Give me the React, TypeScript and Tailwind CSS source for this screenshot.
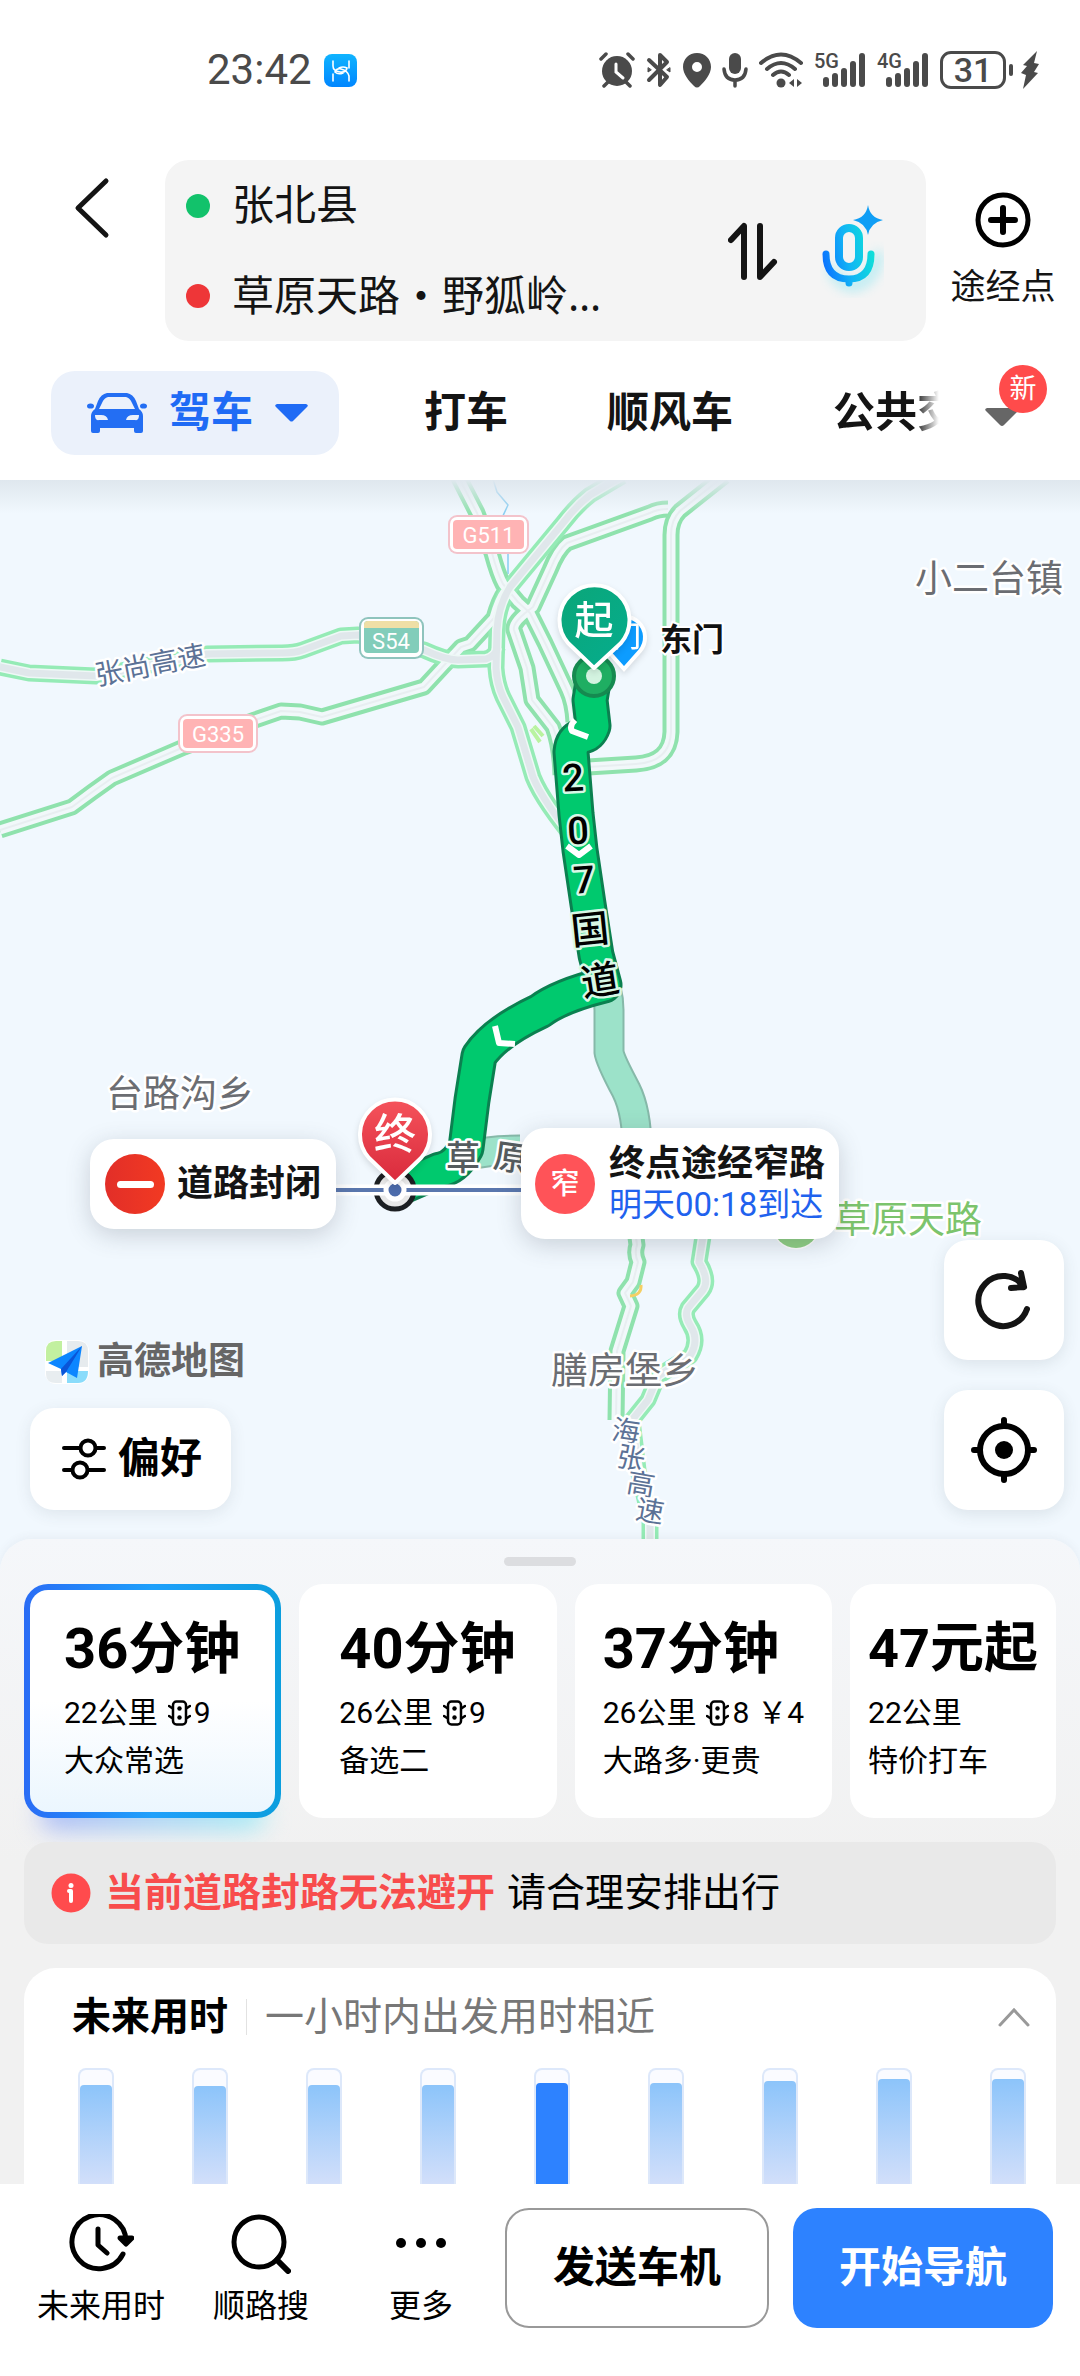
import { useState } from "react";
import clsx from "clsx";

const FONT = "font-['Roboto','Noto_Sans_CJK_SC',sans-serif]";

const TABS = ["打车", "顺风车"];

const ROUTES = [
  { title: "36分钟", distance: "22公里", lights: "9", toll: "", note: "大众常选", pad: "pl-10", size: "text-[56px]" },
  { title: "40分钟", distance: "26公里", lights: "9", toll: "", note: "备选二", pad: "pl-10", size: "text-[56px]" },
  { title: "37分钟", distance: "26公里", lights: "8", toll: "￥4", note: "大路多·更贵", pad: "pl-7", size: "text-[56px]" },
  { title: "47元起", distance: "22公里", lights: "", toll: "", note: "特价打车", pad: "pl-[18px]", size: "text-[54px]" },
];

// 各时段用时（柱子顶部留白，px）
const BARS = [15, 16, 15, 15, 13, 13, 11, 9, 9];
const CURRENT_BAR = 4;

// 普通道路
const ROADS = [
  "M0 830L72 807Q92 792 112 778L184 747L255 720L281 711L300 712L322 717L424 687L461 647L470 644L494 618Q499 600 505 592",
  "M458 476L477 513L492 553Q498 575 503 584L518 602L530 613L545 643L567 690Q573 703 574 722",
  "M724 476L680 511Q671 520 671 535L671 732Q670 762 636 764L588 767",
  "M668 509Q658 509 650 513L567 543Q558 550 550 570L533 607Q512 622 514 630L527 668L532 700L553 727Q560 745 561 775",
  "M635 1230L637 1245Q634 1254 638 1262L633 1282L625 1293L631 1306L617 1351L616 1420",
];

// 高速
const HIGHWAYS = [
  "M0 667L29 673L96 676L150 665L207 654L282 653Q295 653 303 650L341 636L358 635L424 650Q446 660 458 660L486 659Q496 656 497 648",
  "M622 476L590 495Q576 506 563 523L510 587Q498 606 497 630L496 668Q497 684 503 697L518 727L533 777Q543 802 580 846",
  "M704 1230L699 1262Q710 1280 703 1290L688 1308Q684 1315 690 1325Q700 1340 690 1356L658 1376L648 1400L632 1420L638 1470L650 1520L650 1580",
];

const ROUTE =
  "M594 676L590 700L593 726Q590 735 582 736Q572 740 571 752L576 814L580 850L588 904L596 955L604 985Q560 996 540 1011Q495 1032 479 1056L472 1100L466 1148Q455 1168 440 1170L396 1189";

const ROAD_NAME = [
  { ch: "2", x: 573, y: 777, r: -3 },
  { ch: "0", x: 578, y: 830, r: -3 },
  { ch: "7", x: 584, y: 879, r: -4 },
  { ch: "国", x: 590, y: 929, r: -6 },
  { ch: "道", x: 600, y: 980, r: -9 },
];

const HIGHWAY_NAME = [
  { ch: "海", x: 626, y: 1431, r: 8 },
  { ch: "张", x: 631, y: 1458, r: 10 },
  { ch: "高", x: 641, y: 1484, r: 10 },
  { ch: "速", x: 650, y: 1511, r: 10 },
];

function Signal({ label }: { label: string }) {
  return (
    <div className="relative h-9 w-[52px]">
      <span className="absolute left-0 top-0 text-[20px] leading-[18px] font-medium">{label}</span>
      <svg className="absolute right-0 top-0" width="44" height="36" viewBox="0 0 44 36" stroke="currentColor" strokeWidth="6" strokeLinecap="round">
        <path d="M4 28V32M13 24V32M22 19V32M31 12V32M40 4V32" />
      </svg>
    </div>
  );
}

function StatusBar() {
  return (
    <div className="flex h-[140px] items-center justify-between pl-[207px] pr-10 text-[#4a4a4a]">
      <div className="flex items-center gap-3">
        <span className="text-[42px] leading-[48px]">23:42</span>
        <svg width="33" height="33" viewBox="0 0 33 33">
          <defs>
            <linearGradient id="appIcon" x1="0" y1="0" x2="0" y2="1">
              <stop offset="0" stopColor="#10b4ff" />
              <stop offset="1" stopColor="#0086ff" />
            </linearGradient>
          </defs>
          <rect width="33" height="33" rx="8" fill="url(#appIcon)" />
          <path d="M9 7V12Q9 17 16 18Q22 19 23 14Q19 12 15 14M9 27V20M25 7V14M25 27V22Q24 17 17 15Q12 14 11 18Q14 21 19 19" fill="none" stroke="#fff" strokeWidth="1.6" strokeLinecap="round" />
        </svg>
      </div>
      <div className="flex items-center gap-[11px]">
        <svg width="36" height="36" viewBox="0 0 36 36" fill="none" stroke="currentColor" strokeLinecap="round">
          <circle cx="18" cy="19" r="15" fill="currentColor" stroke="none" />
          <path d="M2 7L7 2M34 7L29 2M5 34L9 30M31 34L27 30" strokeWidth="3.5" />
          <path d="M17 12V20L24 26" stroke="#fff" strokeWidth="3" />
        </svg>
        <svg width="26" height="36" viewBox="0 0 26 36" fill="none" stroke="currentColor" strokeWidth="4" strokeLinecap="round" strokeLinejoin="round">
          <path d="M3 8L21 25L14 33V3L21 10L3 28" />
          <path d="M2 16V20L5 18ZM24 16V20L21 18Z" fill="currentColor" strokeWidth="1" />
        </svg>
        <svg width="28" height="36" viewBox="0 0 28 36" fill="currentColor" fillRule="evenodd">
          <path d="M14 1C6 1 0 7 0 15C0 22 6 29 11 34Q14 37 17 34C22 29 28 22 28 15C28 7 22 1 14 1ZM14 10A5 5 0 1 1 14 20A5 5 0 1 1 14 10Z" />
        </svg>
        <svg width="26" height="36" viewBox="0 0 26 36" fill="none" stroke="currentColor" strokeWidth="3.5" strokeLinecap="round">
          <rect x="7" y="1" width="12" height="21" rx="6" fill="currentColor" stroke="none" />
          <path d="M2 17Q3 28 13 28Q23 28 24 17M13 28V34" />
        </svg>
        <svg width="44" height="36" viewBox="0 0 44 36" fill="none" stroke="currentColor" strokeWidth="4" strokeLinecap="round">
          <path d="M2 11Q22 -6 42 11M8 17Q22 5 36 17M14 23Q22 16 30 23" />
          <circle cx="22" cy="31" r="4.500" fill="currentColor" stroke="none" />
          <path d="M35 27V35L30 31ZM38 27V35L43 31Z" fill="currentColor" stroke="none" />
        </svg>
        <Signal label="5G" />
        <Signal label="4G" />
        <div className="flex items-center gap-[3px]">
          <div className="flex h-[38px] w-[66px] items-center justify-center rounded-[11px] border-[3px] border-current text-[34px] leading-8 font-medium">31</div>
          <div className="h-3 w-1 rounded-full bg-current" />
          <svg className="ml-1" width="20" height="38" viewBox="0 0 20 38" fill="currentColor">
            <path d="M17 0L3 14L7 15L1 22L6 24L3 38L18 22L14 21L19 13L14 12Z" />
          </svg>
        </div>
      </div>
    </div>
  );
}

function SearchHeader() {
  return (
    <div className="grid grid-cols-[165px_1fr_154px] pt-5">
      <button aria-label="返回" className="flex h-24 items-center pl-[74px]">
        <svg width="36" height="62" viewBox="0 0 36 62" fill="none" stroke="#141414" strokeWidth="5" strokeLinecap="round" strokeLinejoin="round">
          <path d="M32 4L4 31L32 58" />
        </svg>
      </button>
      <div className="flex items-center rounded-3xl bg-[#f4f4f4] pr-[42px] text-[#141414]">
        <div className="min-w-0 flex-1">
          <button className="flex h-[91px] w-full items-center gap-[22px] pl-[21px] text-[42px] leading-[50px]">
            <span className="size-6 rounded-full bg-[#12c26b]" />
            <span>张北县</span>
          </button>
          <button className="flex h-[90px] w-full items-center gap-[22px] pl-[21px] text-[42px] leading-[50px]">
            <span className="size-6 rounded-full bg-[#ee3638]" />
            <span className="whitespace-nowrap">
              草原天路・野狐岭<span className="font-['Noto_Sans',sans-serif]">…</span>
            </span>
          </button>
        </div>
        <button aria-label="交换起终点">
          <svg width="50" height="60" viewBox="0 0 50 60" fill="none" stroke="#141414" strokeWidth="6" strokeLinecap="round" strokeLinejoin="round">
            <path d="M3 19L16 5V56M32 5V56L46 41" />
          </svg>
        </button>
        <button aria-label="语音输入" className="ml-[42px]">
          <svg width="64" height="94" viewBox="0 0 64 94" fill="none" strokeLinecap="round">
            <defs>
              <linearGradient id="mic" gradientUnits="userSpaceOnUse" x1="2" y1="60" x2="54" y2="50">
                <stop offset="0" stopColor="#0a70ff" />
                <stop offset="0.5" stopColor="#12b4f5" />
                <stop offset="1" stopColor="#0fe0d8" />
              </linearGradient>
              <filter id="micGlow" x="-50%" y="-50%" width="200%" height="200%">
                <feGaussianBlur stdDeviation="6" />
              </filter>
            </defs>
            <path d="M12 66Q20 82 34 82Q54 78 58 52" stroke="#3fdcf0" strokeWidth="10" opacity="0.35" filter="url(#micGlow)" />
            <rect x="19" y="24" width="20" height="39" rx="10" stroke="url(#mic)" strokeWidth="8" />
            <path d="M6 50Q6 75 29 75Q51 75 51 50M29 75V79" stroke="url(#mic)" strokeWidth="7" />
            <path d="M48 1Q50 14 63 16Q50 19 48 31Q46 19 33 16Q46 14 48 1Z" fill="#109ef5" />
          </svg>
        </button>
      </div>
      <button className="flex flex-col items-center gap-[17px] pt-8 text-[35px] leading-[46px] text-[#141414]">
        <svg width="56" height="56" viewBox="0 0 56 56" fill="none" stroke="#000" strokeWidth="5" strokeLinecap="round">
          <circle cx="28" cy="28" r="25" />
          <path d="M28 16V40M16 28H40" strokeWidth="6" />
        </svg>
        途经点
      </button>
    </div>
  );
}

function ModeTabs() {
  return (
    <div className="mt-[30px] mb-[25px] flex h-[84px] items-center pl-[51px] text-[42px] leading-[50px] font-bold text-[#141414]">
      <button className="flex h-[84px] w-[288px] items-center rounded-3xl bg-[#ebf1fb] pl-9 text-[#1f6bf5]">
        <svg width="60" height="42" viewBox="0 0 60 42" fill="#236ef3">
          <path fillRule="evenodd" d="M20 1H40Q46 2 49 9L52 17Q56 20 56 24V39Q56 41 54 41H49Q47 41 47 39V36H13V39Q13 41 11 41H6Q4 41 4 39V24Q4 20 8 17L11 9Q14 2 20 1ZM21 5Q17 6 15 11L12 17H48L45 11Q43 6 39 5ZM8 23Q8 29 12 28H21Q20 23 14 23ZM52 23Q52 29 48 28H39Q40 23 46 23Z" />
          <ellipse cx="3.500" cy="14" rx="3.500" ry="2.600" />
          <ellipse cx="56.500" cy="14" rx="3.500" ry="2.600" />
        </svg>
        <span className="ml-[22px]">驾车</span>
        <svg className="ml-[22px]" width="33" height="18" viewBox="0 0 33 18" fill="#1f6bf5">
          <path d="M2 0H31Q34 1 32 3L18 17Q16.500 18 15 17L1 3Q-1 1 2 0Z" />
        </svg>
      </button>
      {TABS.map((t) => (
        <button key={t} className="ml-[85px] mr-[14px]">{t}</button>
      ))}
      <button className="ml-[86px] whitespace-nowrap mask-r-from-65% mask-r-to-84%">公共交</button>
      <button aria-label="更多方式" className="relative ml-[26px] h-[84px] w-[62px]">
        <svg className="mt-2" width="34" height="19" viewBox="0 0 34 19" fill="#666">
          <path d="M2 0H32Q35 1 33 3L19 17Q17 19 15 17L1 3Q-1 1 2 0Z" />
        </svg>
        <span className="absolute right-0 top-[-6px] flex size-12 items-center justify-center rounded-full bg-[#ff4b4b] text-[27px] leading-8 font-normal text-white">新</span>
      </button>
    </div>
  );
}

function RoadSign({ x, y, w, label }: { x: number; y: number; w: number; label: string }) {
  return (
    <g>
      <rect x={x} y={y} width={w} height="39" rx="9" fill="#f3c3cb" />
      <rect x={x + 2} y={y + 2} width={w - 4} height="35" rx="7" fill="#fff" />
      <rect x={x + 5} y={y + 5} width={w - 10} height="29" rx="4" fill="#ffb3b4" />
      <text x={x + w / 2} y={y + 28} textAnchor="middle" fontSize="22" fill="#fff">{label}</text>
    </g>
  );
}

function MapCanvas() {
  return (
    <svg className="absolute inset-0 size-full" viewBox="0 480 1080 1091" preserveAspectRatio="xMidYMin slice">
      <defs>
        <linearGradient id="pinEnd" x1="0" y1="0" x2="0" y2="1">
          <stop offset="0" stopColor="#f5535b" />
          <stop offset="1" stopColor="#d92a3c" />
        </linearGradient>
        <linearGradient id="pinStart" x1="0" y1="0" x2="1" y2="1">
          <stop offset="0" stopColor="#0ba678" />
          <stop offset="1" stopColor="#05ad8e" />
        </linearGradient>
        <linearGradient id="topShade" x1="0" y1="0" x2="0" y2="1">
          <stop offset="0" stopColor="#dfe7ee" />
          <stop offset="1" stopColor="#dfe7ee" stopOpacity="0" />
        </linearGradient>
      </defs>
      <g fill="none" strokeLinejoin="round">
        <path d="M492 476L497 492L508 505L501 520M508 550V574" stroke="#86cdf2" strokeWidth="1.500" />
        <path d="M531 729L540 742M534 726L543 736" stroke="#b9f3a0" strokeWidth="4" />
        {ROADS.map((d) => (
          <path key={d} d={d} stroke="#8fe2ad" strokeWidth="17" />
        ))}
        {HIGHWAYS.map((d) => (
          <path key={d} d={d} stroke="#95ebb6" strokeWidth="17" />
        ))}
        {ROADS.map((d) => (
          <path key={d} d={d} stroke="#f1f8fa" strokeWidth="9" />
        ))}
        {ROADS.map((d) => (
          <path key={d} d={d} stroke="#e8eef1" strokeWidth="2" />
        ))}
        {HIGHWAYS.map((d) => (
          <path key={d} d={d} stroke="#eef8f6" strokeWidth="10" />
        ))}
        {HIGHWAYS.map((d) => (
          <path key={d} d={d} stroke="#e0e7eb" strokeWidth="7" />
        ))}
        <path d="M641 1285Q642 1295 630 1296" stroke="#f5cf63" strokeWidth="3" />
        {/* 备选路线 */}
        <path d="M600 975Q609 990 609 1010V1052Q610 1060 626 1090Q637 1112 637 1150M470 1155Q490 1150 520 1150" stroke="#86b9a9" strokeWidth="31" />
        <path d="M600 975Q609 990 609 1010V1052Q610 1060 626 1090Q637 1112 637 1150M470 1155Q490 1150 520 1150" stroke="#9ce2c9" strokeWidth="27" />
        {/* 主路线 */}
        <path d={ROUTE} stroke="#0b8050" strokeWidth="37" />
        <path d={ROUTE} stroke="#00c96e" strokeWidth="31" />
        <path d="M575 720Q569 726 572 731L588 737M567 846L579 855L591 846M495 1026L499 1043L515 1044" stroke="#fff" strokeWidth="6" />
      </g>
      <rect x="0" y="480" width="1080" height="34" fill="url(#topShade)" />

      {/* 道路编号 */}
      <RoadSign x={448} y={515} w={81} label="G511" />
      <RoadSign x={178} y={714} w={80} label="G335" />
      <rect x="359" y="617" width="65" height="42" rx="9" fill="#8fc4bd" />
      <rect x="361" y="619" width="61" height="38" rx="7" fill="#fff" />
      <rect x="364" y="621" width="55" height="32" rx="4" fill="#82cdba" />
      <path d="M364 628V625Q364 621 368 621H415Q419 621 419 625V628Z" fill="#efdfa6" />
      <text x="391" y="649" textAnchor="middle" fontSize="22" fill="#fff">S54</text>

      {/* 地名 */}
      <g fontSize="37" fill="#6b6d72" stroke="#fff" strokeWidth="5" strokeLinejoin="round" paintOrder="stroke">
        <text x="915" y="592">小二台镇</text>
        <text x="106" y="1107">台路沟乡</text>
        <text x="551" y="1384">膳房堡乡</text>
        <text x="446" y="1170" fontSize="34" fontWeight="500" fill="#555b5e">草</text>
        <text x="494" y="1170" fontSize="34" fontWeight="500" fill="#555b5e" transform="rotate(8 511 1157)">原</text>
        <text x="94" y="675" fontSize="28" fill="#5c7296" transform="rotate(-11 150 664)">张尚高速</text>
        {HIGHWAY_NAME.map((c) => (
          <text key={c.ch} x={c.x} y={c.y + 10} fontSize="28" fill="#5c7296" textAnchor="middle" transform={`rotate(${c.r} ${c.x} ${c.y})`}>{c.ch}</text>
        ))}
        <circle cx="796" cy="1225" r="23" fill="#8fd083" stroke="#fff" strokeWidth="3" />
        <text x="834" y="1233" fill="#7cc46c">草原天路</text>
      </g>
      <g fontSize="38" fontWeight="500" fill="#000" stroke="#d8f8e6" strokeWidth="5" strokeLinejoin="round" paintOrder="stroke" textAnchor="middle">
        {ROAD_NAME.map((c) => (
          <text key={c.ch} x={c.x} y={c.y + 14} transform={`rotate(${c.r} ${c.x} ${c.y})`}>{c.ch}</text>
        ))}
      </g>

      {/* 起点 */}
      <g className="drop-shadow-md">
        <path d="M624 669L608 651A21 21 0 1 1 640 651Z" fill="#0d9cff" stroke="#fff" strokeWidth="4" />
        <text x="627" y="647" textAnchor="middle" fontSize="28" fontWeight="500" fill="#fff">门</text>
      </g>
      <circle cx="594" cy="676" r="20" fill="#1fae62" stroke="#158a50" strokeWidth="4" />
      <circle cx="594" cy="676" r="8" fill="#d3f3e0" />
      <g className="drop-shadow-md">
        <path d="M594 668L568 643A35 35 0 1 1 621 643Z" fill="url(#pinStart)" stroke="#fff" strokeWidth="4" strokeLinejoin="round" />
        <text x="594" y="634" textAnchor="middle" fontSize="39" fontWeight="500" fill="#fff">起</text>
      </g>
      <text x="660" y="651" fontSize="32" fontWeight="700" fill="#111" stroke="#fff" strokeWidth="4" paintOrder="stroke">东门</text>

      {/* 终点 */}
      <circle cx="395" cy="1190" r="19" fill="#e8e8e8" stroke="#1c1f22" strokeWidth="5" />
      <path d="M330 1190H530" stroke="#fff" strokeWidth="11" />
      <path d="M330 1190H530" stroke="#5a77ae" strokeWidth="4" />
      <circle cx="395" cy="1190" r="9" fill="#4d6cac" stroke="#fff" strokeWidth="5" />
      <g className="drop-shadow-md">
        <path d="M395 1183L369 1158A35 35 0 1 1 421 1158Z" fill="url(#pinEnd)" stroke="#fff" strokeWidth="4" strokeLinejoin="round" />
        <text x="395" y="1149" textAnchor="middle" fontSize="42" fontWeight="500" fill="#fff">终</text>
      </g>
    </svg>
  );
}

function MapArea() {
  return (
    <div className="relative min-h-[900px] flex-1 overflow-hidden bg-[#f1f8fe]">
      <MapCanvas />

      <div className="absolute left-[90px] top-[659px] flex h-[90px] w-[246px] items-center gap-3 rounded-3xl bg-white pl-[15px] text-[36px] leading-[42px] font-bold text-[#141414] shadow-[0_6px_24px_rgba(60,70,80,0.22)]">
        <span className="flex size-[60px] items-center justify-center rounded-full bg-linear-to-r from-[#e22e28] to-[#f23a22]">
          <span className="h-[7px] w-[37px] rounded-full bg-white" />
        </span>
        道路封闭
      </div>

      <div className="absolute left-[521px] top-[648px] flex h-[111px] w-[318px] items-center gap-[14px] rounded-3xl bg-white pl-[14px] shadow-[0_6px_24px_rgba(60,70,80,0.22)]">
        <span className="flex size-[60px] items-center justify-center rounded-full bg-[#ff5358] text-[29px] leading-9 font-medium text-white">窄</span>
        <div className="whitespace-nowrap">
          <div className="text-[36px] leading-[42px] font-bold text-[#141414]">终点途经窄路</div>
          <div className="text-[33px] leading-10 text-[#1f62ee]">明天00:18到达</div>
        </div>
      </div>

      <div className="absolute bottom-[61px] left-[30px]">
        <div className="mb-6 ml-[15px] flex items-center gap-2 text-[37px] leading-[44px] font-bold text-[#666]">
          <svg width="44" height="44" viewBox="0 0 44 44">
            <rect width="44" height="44" rx="11" fill="#fff" />
            <path d="M11 1H17V21H1V11Q1 1 11 1Z" fill="#c2f0a0" />
            <path d="M22 1H33Q43 1 43 11V27H22Z" fill="#e6ebee" />
            <path d="M1 31H17V43H11Q1 43 1 34Z" fill="#e8edf0" />
            <path d="M22 31H43Q43 43 33 43H22Z" fill="#8adcfb" />
            <path d="M37 6L3 23L16 29L17 36L21 32L32 38Z" fill="#0c86ff" />
            <path d="M37 6L16 29L17 36L21 32Z" fill="#0a55d8" />
          </svg>
          高德地图
        </div>
        <button className="flex h-[102px] w-[201px] items-center gap-3 rounded-3xl bg-white pl-8 text-[42px] leading-[50px] font-bold text-black shadow-[0_4px_16px_rgba(60,70,80,0.1)]">
          <svg width="44" height="42" viewBox="0 0 44 42" fill="none" stroke="#000" strokeWidth="4" strokeLinecap="round">
            <path d="M2 10H18M34 10H42M2 32H10M26 32H42" />
            <circle cx="26" cy="10" r="7.500" />
            <circle cx="18" cy="32" r="7.500" />
          </svg>
          偏好
        </button>
      </div>

      <div className="absolute bottom-[61px] right-4 flex flex-col gap-[30px]">
        <button aria-label="刷新" className="flex size-[120px] items-center justify-center rounded-3xl bg-white shadow-[0_4px_16px_rgba(60,70,80,0.12)]">
          <svg width="66" height="66" viewBox="0 0 66 66" fill="none" stroke="#141414" strokeWidth="6" strokeLinecap="round" strokeLinejoin="round">
            <path d="M56 42A25 25 0 1 1 53 20M50 6L53 20L40 21" />
          </svg>
        </button>
        <button aria-label="定位" className="flex size-[120px] items-center justify-center rounded-3xl bg-white shadow-[0_4px_16px_rgba(60,70,80,0.12)]">
          <svg width="66" height="66" viewBox="0 0 66 66" fill="none" stroke="#000" strokeWidth="6" strokeLinecap="round">
            <circle cx="33" cy="33" r="24" />
            <circle cx="33" cy="33" r="9" fill="#000" stroke="none" />
            <path d="M33 3V9M33 57V63M3 33H9M57 33H63" />
          </svg>
        </button>
      </div>
    </div>
  );
}

function LightIcon() {
  return (
    <svg className="ml-[10px] mr-[3px]" width="23" height="26" viewBox="0 0 23 26" fill="none" stroke="#000" strokeWidth="2.500" strokeLinecap="round">
      <rect x="5" y="1.500" width="13" height="23" rx="3.500" />
      <path d="M1 6L4 8M1 16L4 18M22 6L19 8M22 16L19 18" />
      <circle cx="11.500" cy="8.500" r="2.200" fill="#000" stroke="none" />
      <circle cx="11.500" cy="17.500" r="2.200" fill="#000" stroke="none" />
    </svg>
  );
}

function RouteCards() {
  const [selected, setSelected] = useState(0);

  return (
    <div className="mt-[18px] grid grid-cols-[5fr_5fr_5fr_4fr] gap-[18px]">
      {ROUTES.map((r, i) => (
        <button key={r.title} onClick={() => setSelected(i)} className="relative h-[234px] text-left whitespace-nowrap text-black">
          {i === selected && (
            <>
              <span className="absolute inset-x-4 bottom-[-12px] h-8 rounded-full bg-linear-to-r from-[#a9b8f5] to-[#a5ecf5] blur-md" />
              <span className="absolute inset-0 rounded-3xl bg-linear-to-r from-[#2a6cf5] via-[#1ea0fb] to-[#0b9ede]" />
            </>
          )}
          <span className={clsx("absolute bg-white", i === selected ? "inset-[6px] rounded-[18px] bg-linear-to-b from-white from-50% to-[#ebf6fe]" : "inset-0 rounded-3xl")} />
          <span className={clsx("relative flex h-full flex-col pt-[33px]", r.pad)}>
            <span className={clsx("leading-[64px] font-bold", r.size)}>{r.title}</span>
            <span className="mt-3 flex items-center text-[30px] leading-10">
              {r.distance}
              {r.lights && <LightIcon />}
              {r.lights}
              {r.toll && <span className="ml-2">{r.toll}</span>}
            </span>
            <span className="mt-2 text-[30px] leading-10">{r.note}</span>
          </span>
        </button>
      ))}
    </div>
  );
}

function FutureTime() {
  return (
    <div className="mt-6 overflow-hidden rounded-t-[32px] bg-white pl-[54px] pr-[30px] pt-7">
      <div className="flex items-center text-[39px] leading-[42px]">
        <span className="-ml-[6px] font-bold text-black">未来用时</span>
        <span className="mx-[18px] h-9 w-px bg-[#e2e2e2]" />
        <span className="text-[#777]">一小时内出发用时相近</span>
        <button aria-label="收起" className="-mr-1 ml-auto">
          <svg width="32" height="20" viewBox="0 0 32 20" fill="none" stroke="#999" strokeWidth="3" strokeLinecap="round">
            <path d="M2 18L16 3L30 18" />
          </svg>
        </button>
      </div>
      <div className="mt-[30px] flex h-[116px] justify-between">
        {BARS.map((top, i) => (
          <div key={i} className="w-9 rounded-t-lg border-x-2 border-t-2 border-[#dde8fa] bg-[#fafbff]" style={{ paddingTop: top }}>
            <div className={clsx("h-full rounded-t-sm", i === CURRENT_BAR ? "bg-[#2d82ff]" : "bg-linear-to-b from-[#8cc4fa] to-[#d2dffa]")} />
          </div>
        ))}
      </div>
    </div>
  );
}

function Sheet() {
  return (
    <div className="relative -mt-8 rounded-t-[32px] bg-linear-to-b from-[#f5f7fa] to-[#f1f1f1] to-50% px-6 pt-[18px] shadow-[0_-2px_10px_rgba(60,70,80,0.06)]">
      <div className="mx-auto h-[9px] w-[72px] rounded-full bg-[#dcdde0]" />
      <RouteCards />
      <div className="relative mt-6 flex h-[102px] items-center rounded-3xl bg-[#e9e9e9] pl-[27px] text-[39px] leading-[46px]">
        <svg width="40" height="40" viewBox="0 0 40 40">
          <circle cx="20" cy="20" r="19.500" fill="#ff4b4d" />
          <circle cx="20" cy="12.500" r="2.500" fill="#fff" />
          <path d="M18 18H20V28" fill="none" stroke="#fff" strokeWidth="4" strokeLinecap="round" strokeLinejoin="round" />
        </svg>
        <span className="ml-[14px] font-bold text-[#f84c4c]">当前道路封路无法避开</span>
        <span className="ml-3 text-black">请合理安排出行</span>
      </div>
      <FutureTime />
    </div>
  );
}

function BottomBar() {
  const item = "flex flex-col items-center gap-3 pt-[6px] text-[32px] leading-10 text-black";
  return (
    <div className="relative flex bg-white pt-6 pb-12 pr-[27px]">
      <div className="grid w-[505px] grid-cols-3 pl-[21px] pr-1">
        <button className={item}>
          <svg width="66" height="60" viewBox="0 0 66 60" fill="none" stroke="#000" strokeWidth="5" strokeLinecap="round" strokeLinejoin="round">
            <path d="M55 40A27 27 0 1 1 58 28M30 15V31L39 39" />
            <path d="M52 24L58 30L64 24Z" fill="#000" />
          </svg>
          未来用时
        </button>
        <button className={item}>
          <svg width="60" height="60" viewBox="0 0 60 60" fill="none" stroke="#000" strokeWidth="5" strokeLinecap="round">
            <circle cx="28" cy="28" r="25" />
            <path d="M46 46L57 57" strokeWidth="6" />
          </svg>
          顺路搜
        </button>
        <button className={item}>
          <svg width="60" height="60" viewBox="0 0 60 60" fill="#000">
            <circle cx="10" cy="29" r="5" />
            <circle cx="30" cy="29" r="5" />
            <circle cx="50" cy="29" r="5" />
          </svg>
          更多
        </button>
      </div>
      <div className="flex flex-1 gap-6 text-[42px] leading-[50px] font-bold">
        <button className="h-[120px] flex-1 rounded-3xl border-2 border-[#999] bg-white text-black">发送车机</button>
        <button className="h-[120px] flex-1 rounded-3xl bg-[#2d82ff] text-white">开始导航</button>
      </div>
    </div>
  );
}

export default function App() {
  return (
    <div className={clsx("flex min-h-screen flex-col bg-white", FONT)}>
      <header className="bg-white">
        <StatusBar />
        <SearchHeader />
        <ModeTabs />
      </header>
      <MapArea />
      <Sheet />
      <BottomBar />
    </div>
  );
}
